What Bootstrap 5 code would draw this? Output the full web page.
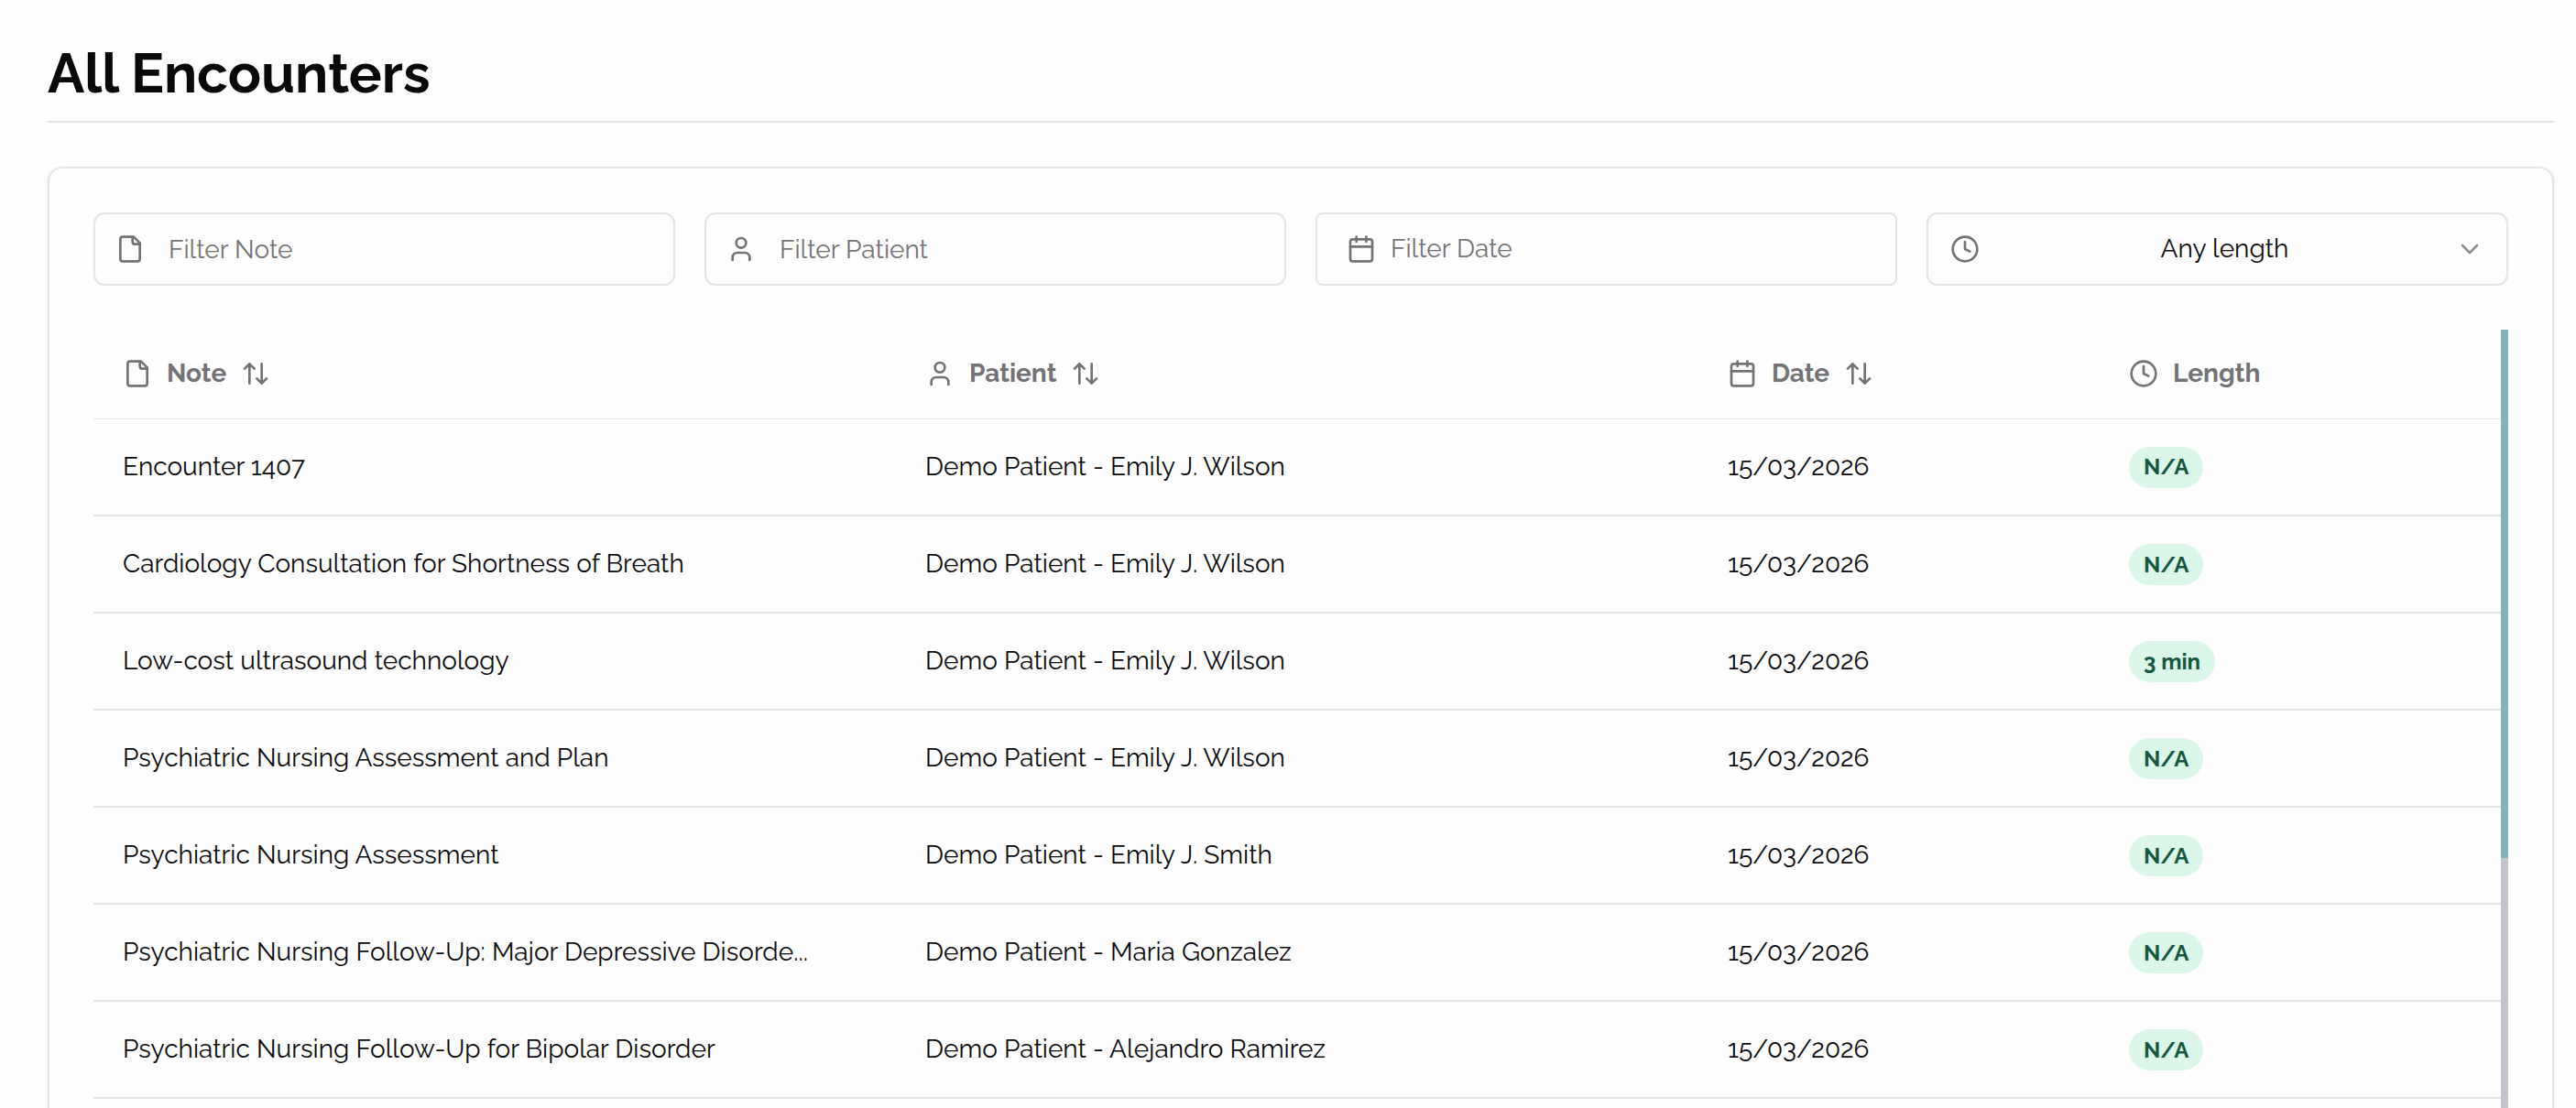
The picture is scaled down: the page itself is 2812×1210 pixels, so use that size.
<!DOCTYPE html>
<html lang="en">
<head>
<meta charset="utf-8">
<meta name="viewport" content="width=device-width, initial-scale=1">
<title>All Encounters</title>
<link rel="stylesheet" href="https://cdn.jsdelivr.net/npm/bootstrap@5.3.0/dist/css/bootstrap.min.css">
<style>
  :root { --ink: #09090b; --muted: #737275; --line: #e4e4e6; }
  body { font-family: Raleway, Lato, sans-serif; font-size: 28px; line-height: 40px; color: var(--ink); background: #fefefe; }
  .page { height: 1210px; padding: 40px 24px 0 52px; }
  .page-head { height: 94px; border-bottom: 2px solid var(--line); }
  .page-title { font-size: 60px; line-height: 80px; font-weight: 700; }
  .panel { height: 1028px; margin-top: 48px; padding: 48px 48px 0; background: #fefefe; border: 2px solid var(--line); border-bottom: 0; border-radius: 16px 16px 0 0; box-shadow: 0 2px 6px rgba(0,0,0,.08); }
  .filters { display: grid; grid-template-columns: repeat(4, minmax(0, 1fr)); gap: 32px; }
  .filter-box { height: 80px; border: 2px solid var(--line); border-radius: 12px; padding: 0 24px; color: var(--muted); background: #fefefe; }
  .filter-box.has-input { padding-left: 22px; gap: 26px; }
  .filter-box.date-box { border-radius: 8px; padding-left: 32px; gap: 16px; }
  .filter-box .form-control { font: inherit; color: var(--ink); height: 72px; padding: 0; }
  .filter-box .form-control::placeholder { color: var(--muted); opacity: 1; }
  .date-label { padding-bottom: 1px; }
  .length-label { color: var(--ink); margin-left: 16px; padding-bottom: 1px; }
  .ico { width: 32px; height: 32px; flex: none; fill: none; stroke: currentColor; stroke-width: 2; stroke-linecap: round; stroke-linejoin: round; }
  .chev { opacity: .8; }
  .list-area { margin-top: 48px; height: 850px; }
  .enc-table { table-layout: fixed; margin: 0; width: 2628px; --bs-table-bg: transparent; --bs-table-color: var(--ink); color: var(--ink); }
  .enc-table th, .enc-table td { padding: 0 32px; vertical-align: middle; border: 0; white-space: nowrap; }
  .enc-table thead tr { height: 97px; border-bottom: 1px solid var(--line); }
  .enc-table thead th { color: var(--muted); font-weight: 700; }
  .head-cell { gap: 16px; }
  .enc-table tbody tr { height: 106px; border-bottom: 2px solid var(--line); }
  .enc-table tbody td.len { padding-top: 1px; }
  .pill { display: flex; align-items: center; width: fit-content; height: 45px; padding: 0 16px; border-radius: 23px; background: #dbf7ea; color: #15573f; font-size: 24px; font-weight: 700; }
  .track { width: 8px; background: #c4c4cc; }
  .thumb { height: 577px; background: #86b2b9; }
</style>
</head>
<body class="overflow-hidden">
<svg class="d-none">
  <symbol id="i-file" viewBox="0 0 24 24"><path d="M15 2H6a2 2 0 0 0-2 2v16a2 2 0 0 0 2 2h12a2 2 0 0 0 2-2V7Z"/><path d="M14 2v4a2 2 0 0 0 2 2h4"/></symbol>
  <symbol id="i-user" viewBox="0 0 24 24"><path d="M19 21v-2a4 4 0 0 0-4-4H9a4 4 0 0 0-4 4v2"/><circle cx="12" cy="7" r="4"/></symbol>
  <symbol id="i-cal" viewBox="0 0 24 24"><path d="M8 2v4M16 2v4"/><rect width="18" height="18" x="3" y="4" rx="2"/><path d="M3 10h18"/></symbol>
  <symbol id="i-clock" viewBox="0 0 24 24"><circle cx="12" cy="12" r="10"/><path d="M12 6v6l4 2"/></symbol>
  <symbol id="i-sort" viewBox="0 0 24 24"><path d="m21 16-4 4-4-4M17 20V4M3 8l4-4 4 4M7 4v16"/></symbol>
  <symbol id="i-chev" viewBox="0 0 24 24"><path d="m6 9 6 6 6-6"/></symbol>
</svg>
<main class="page">
  <header class="page-head"><h1 class="page-title m-0">All Encounters</h1></header>
  <section class="panel">
    <div class="filters">
      <label class="filter-box has-input d-flex align-items-center"><svg class="ico"><use href="#i-file"/></svg><input class="form-control border-0 bg-transparent shadow-none rounded-0" type="text" placeholder="Filter Note"></label>
      <label class="filter-box has-input d-flex align-items-center"><svg class="ico"><use href="#i-user"/></svg><input class="form-control border-0 bg-transparent shadow-none rounded-0" type="text" placeholder="Filter Patient"></label>
      <button type="button" class="filter-box date-box d-flex align-items-center"><svg class="ico"><use href="#i-cal"/></svg><span class="date-label">Filter Date</span></button>
      <button type="button" class="filter-box d-flex align-items-center justify-content-between"><svg class="ico"><use href="#i-clock"/></svg><span class="length-label">Any length</span><svg class="ico chev"><use href="#i-chev"/></svg></button>
    </div>
    <div class="list-area d-flex">
      <div class="flex-grow-1">
        <table class="table enc-table">
          <colgroup><col style="width:876px"><col style="width:876px"><col style="width:438px"><col style="width:438px"></colgroup>
          <thead><tr>
            <th><div class="head-cell d-flex align-items-center"><svg class="ico"><use href="#i-file"/></svg><span>Note</span><svg class="ico"><use href="#i-sort"/></svg></div></th>
            <th><div class="head-cell d-flex align-items-center"><svg class="ico"><use href="#i-user"/></svg><span>Patient</span><svg class="ico"><use href="#i-sort"/></svg></div></th>
            <th><div class="head-cell d-flex align-items-center"><svg class="ico"><use href="#i-cal"/></svg><span>Date</span><svg class="ico"><use href="#i-sort"/></svg></div></th>
            <th><div class="head-cell d-flex align-items-center"><svg class="ico"><use href="#i-clock"/></svg><span>Length</span></div></th>
          </tr></thead>
          <tbody>
            <tr><td>Encounter 1407</td><td>Demo Patient - Emily J. Wilson</td><td>15/03/2026</td><td class="len"><span class="pill">N/A</span></td></tr>
            <tr><td>Cardiology Consultation for Shortness of Breath</td><td>Demo Patient - Emily J. Wilson</td><td>15/03/2026</td><td class="len"><span class="pill">N/A</span></td></tr>
            <tr><td>Low-cost ultrasound technology</td><td>Demo Patient - Emily J. Wilson</td><td>15/03/2026</td><td class="len"><span class="pill">3 min</span></td></tr>
            <tr><td>Psychiatric Nursing Assessment and Plan</td><td>Demo Patient - Emily J. Wilson</td><td>15/03/2026</td><td class="len"><span class="pill">N/A</span></td></tr>
            <tr><td>Psychiatric Nursing Assessment</td><td>Demo Patient - Emily J. Smith</td><td>15/03/2026</td><td class="len"><span class="pill">N/A</span></td></tr>
            <tr><td>Psychiatric Nursing Follow-Up: Major Depressive Disorde...</td><td>Demo Patient - Maria Gonzalez</td><td>15/03/2026</td><td class="len"><span class="pill">N/A</span></td></tr>
            <tr><td>Psychiatric Nursing Follow-Up for Bipolar Disorder</td><td>Demo Patient - Alejandro Ramirez</td><td>15/03/2026</td><td class="len"><span class="pill">N/A</span></td></tr>
          </tbody>
        </table>
      </div>
      <div class="track"><div class="thumb"></div></div>
    </div>
  </section>
</main>
<script src="https://cdn.jsdelivr.net/npm/bootstrap@5.3.0/dist/js/bootstrap.bundle.min.js"></script>
</body>
</html>
